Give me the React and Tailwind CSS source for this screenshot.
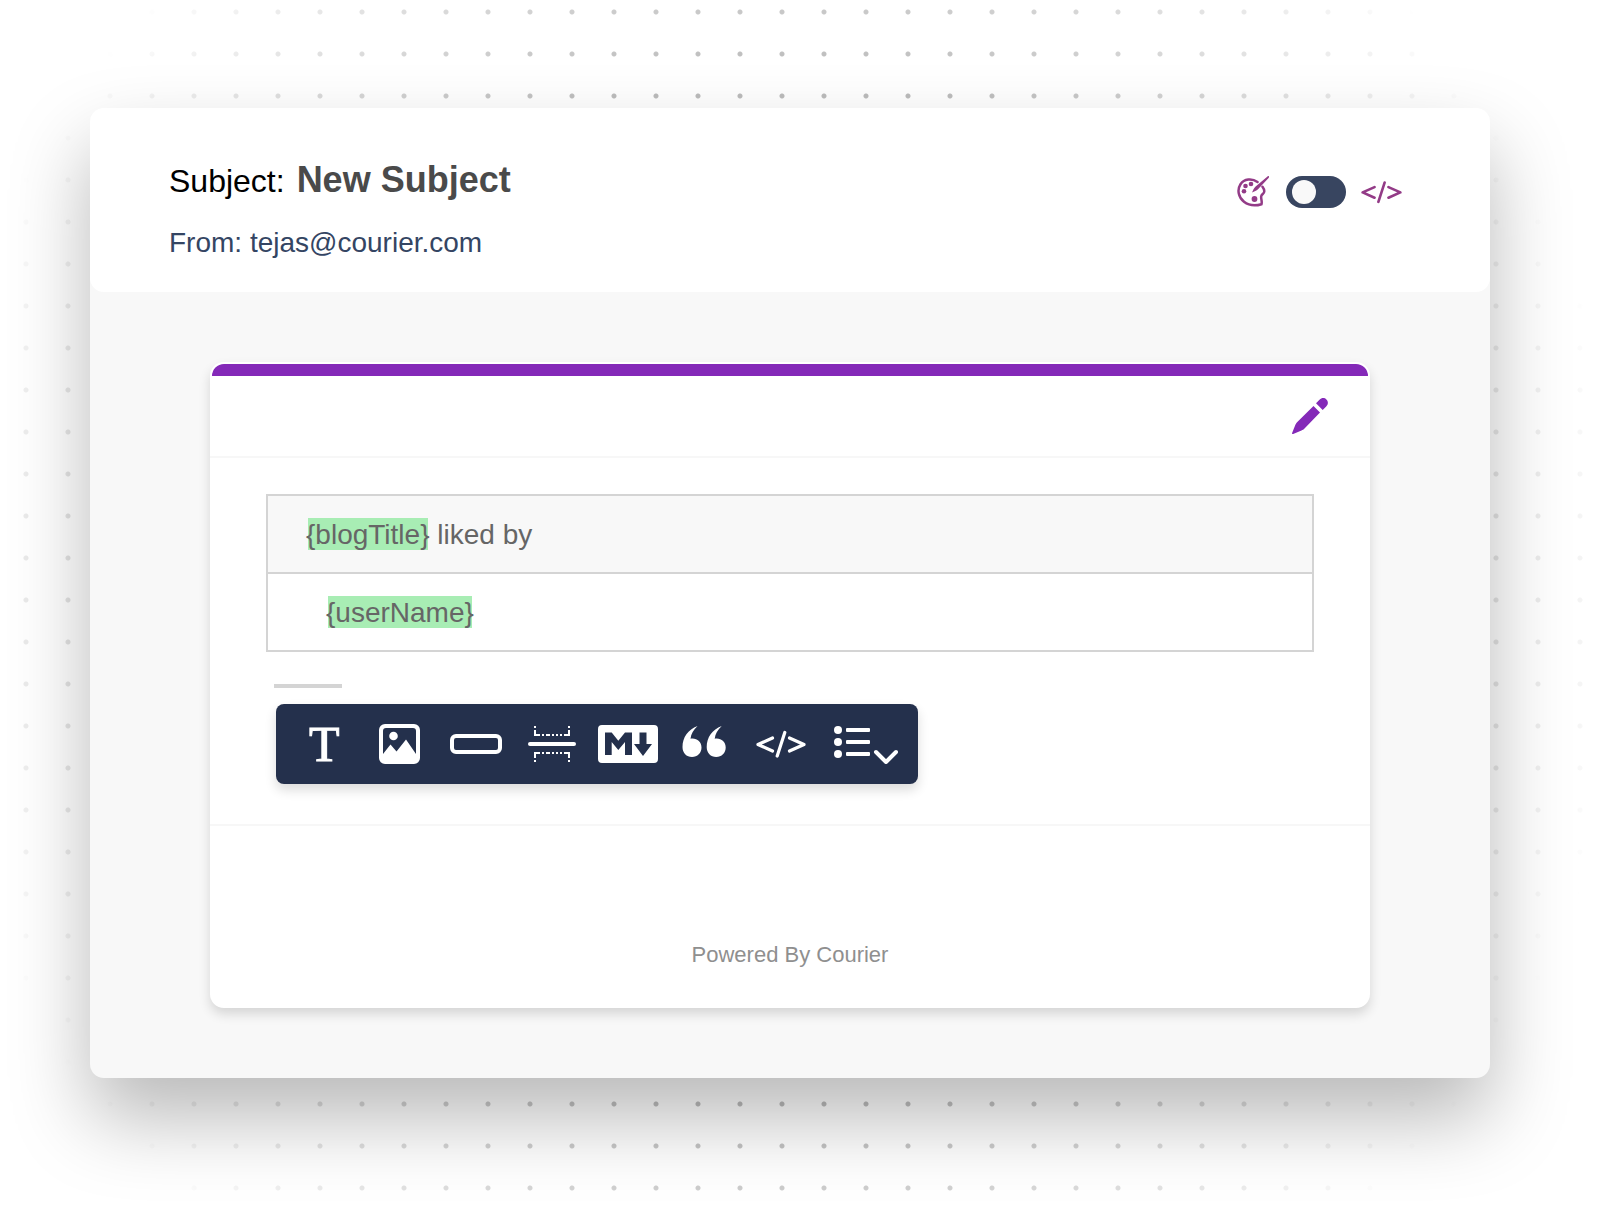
const HIGHLIGHT =
  "bg-transparent bg-[linear-gradient(#a8edb4,#a8edb4)] bg-[length:calc(100%_-_4px)_100%] bg-center bg-no-repeat pt-px text-inherit";

function CodeIcon({ className }) {
  return (
    <svg viewBox="0 0 50 28" className={className} fill="none" stroke="currentColor" strokeWidth="3.2" strokeLinecap="round" strokeLinejoin="round" aria-hidden="true">
      <path d="M16.500 8 2 14.500l14.500 6.500M33.500 8 48 14.500 33.500 21M28.800 2.500 21.200 26" />
    </svg>
  );
}

function PaletteIcon() {
  return (
    <svg viewBox="0 0 32 32" className="mr-0.5 h-8 w-8" aria-hidden="true">
      <path
        d="M20.500 6C15 2 7 2.800 3.500 8.200-.2 14 1.500 21.500 7 25.800c4.600 3.500 11.500 4.200 17.500 2.400.9-3-.9-5.400-.2-8.200.6-2 3-2.400 3-4.800 0-1.800-.8-3.200-1.800-4.500"
        fill="none"
        stroke="currentColor"
        strokeWidth="2.500"
        strokeLinecap="round"
      />
      <circle cx="14" cy="8" r="2.300" fill="currentColor" />
      <circle cx="8.500" cy="10" r="2.300" fill="currentColor" />
      <circle cx="7" cy="15.200" r="2.300" fill="currentColor" />
      <circle cx="17.500" cy="23" r="2.900" fill="currentColor" />
      <path d="M31.800.200c.5.500.3 1.200-.2 1.700L21 13.200c-1.500 1.500-3.600 2-6 3.200 1.200-2.600 2-4.500 3.600-6L30.500.500c.5-.4 1-.6 1.300-.3Z" fill="currentColor" />
    </svg>
  );
}

function PencilIcon() {
  return (
    <svg viewBox="0 0 36 36" className="size-9" fill="currentColor" aria-hidden="true">
      <path d="M21.500 8 28 14.500 12.500 30.500c-1 1-1.800 1.500-3 2L1.200 36c-.9.300-1.400-.3-1.100-1.100L3.300 27c.5-1.200 1-2 2-3Z" />
      <path d="m24 5.300 3.500-3.600c2.200-2.200 5-2.200 6.900-.2 2 2 2 4.800-.2 7L30.700 12Z" />
    </svg>
  );
}

function ImageIcon() {
  return (
    <svg viewBox="0 0 41 40" className="h-10 w-[41px]" aria-hidden="true">
      <path
        fill="currentColor"
        fillRule="evenodd"
        d="M6 0h29a6 6 0 0 1 6 6v28a6 6 0 0 1-6 6H6a6 6 0 0 1-6-6V6a6 6 0 0 1 6-6ZM7 4a3 3 0 0 0-3 3v23l7.500-9.500 6 7L27 15.500 37 30V7a3 3 0 0 0-3-3Z"
      />
      <circle cx="14.500" cy="12" r="4.300" fill="currentColor" />
    </svg>
  );
}

function ButtonIcon() {
  return (
    <svg viewBox="0 0 52 20" className="h-5 w-[52px]" aria-hidden="true">
      <rect x="2" y="2" width="48" height="16" rx="4" fill="none" stroke="currentColor" strokeWidth="4" />
    </svg>
  );
}

function DividerIcon() {
  return (
    <svg viewBox="0 0 48 36" className="h-9 w-12" fill="currentColor" aria-hidden="true">
      <rect x="0" y="16" width="48" height="4" rx="2" />
      <g fill="none" stroke="currentColor" strokeWidth="2">
        <path d="M7 0v2M41 0v2M7 4v5h5M41 4v5h-5M7 36v-2M41 36v-2M7 32v-5h5M41 32v-5h-5" />
        <path d="M14 9h2M18 9h4M24 9h2M28 9h2M32 9h2M14 27h2M18 27h4M24 27h2M28 27h2M32 27h2" />
      </g>
    </svg>
  );
}

function MarkdownIcon() {
  return (
    <svg viewBox="0 -1 60 40" className="h-10 w-[60px]" fill="currentColor" aria-hidden="true">
      <path
        fillRule="evenodd"
        d="M4 0h52a4 4 0 0 1 4 4v30a4 4 0 0 1-4 4H4a4 4 0 0 1-4-4V4a4 4 0 0 1 4-4ZM7 7.500V30h6.700V17l6.600 8 6.700-8v13h7V7.500h-7l-6.700 8.200-6.600-8.200ZM41.500 7.500v11.500H36L45 31l9-12h-5.500V7.500Z"
      />
    </svg>
  );
}

function QuoteIcon() {
  return (
    <svg viewBox="0 0 44 31" className="mb-1.5 h-[31px] w-11" fill="currentColor" aria-hidden="true">
      <path d="M15.500 0C6 3.500.500 11.500.500 21c0 6 4 10 9.500 10 5.400 0 9.500-4 9.500-9.500 0-5.300-4-9-9-9-.7 0-1.400 0-2 .2C9 8 11.500 4 15.500 0Z" />
      <path d="M39.700 0c-9.500 3.500-15 11.500-15 21 0 6 4 10 9.500 10 5.400 0 9.500-4 9.500-9.500 0-5.300-4-9-9-9-.7 0-1.400 0-2 .2C33.200 8 35.700 4 39.700 0Z" />
    </svg>
  );
}

function ListIcon() {
  return (
    <svg viewBox="0 -1 64 40" className="h-10 w-16" fill="currentColor" aria-hidden="true">
      <circle cx="4" cy="5" r="4" />
      <circle cx="4" cy="17" r="4" />
      <circle cx="4" cy="29" r="4" />
      <rect x="12" y="3" width="24" height="4" rx="1" />
      <rect x="12" y="15" width="24" height="4" rx="1" />
      <rect x="12" y="27" width="24" height="4" rx="1" />
      <path d="m42 27 10 10 10-10" fill="none" stroke="currentColor" strokeWidth="4" strokeLinecap="round" strokeLinejoin="round" />
    </svg>
  );
}

function Tool({ label, className, children }) {
  return (
    <button type="button" aria-label={label} className={`flex h-10 items-center ${className}`}>
      {children}
    </button>
  );
}

export default function App() {
  return (
    <main className="relative isolate min-h-screen overflow-hidden bg-white pt-[108px] pr-32 pb-[148px] pl-[90px] font-['Liberation_Sans',Arial,sans-serif]">
      <div className="absolute inset-0 -z-10 bg-[radial-gradient(circle,#bcbcbc_1px,#bcbcbc_2px,#bcbcbc00_3px)] bg-[size:42px_42px] bg-[position:5px_33px] [mask-image:radial-gradient(circle_860px_at_48%_48%,black_60%,transparent)]" />
      <div className="rounded-[14px] bg-[#f8f8f8] pb-[70px] shadow-[0_40px_80px_rgba(0,0,0,0.28)]">
        <header className="flex items-start justify-between rounded-[14px] bg-white pt-12 pr-20 pb-[29px] pl-[79px]">
          <div>
            <h1 className="flex items-baseline gap-3 leading-12">
              <span className="text-[32px] text-black">Subject:</span>
              <span className="text-[36px] font-bold text-[#4a4a4a]">New Subject</span>
            </h1>
            <p className="mt-[18px] text-[28px] leading-10 text-[#344563]">From: tejas@courier.com</p>
          </div>
          <div className="mt-5 mr-2 flex items-center gap-[15px] text-[#933b87]">
            <PaletteIcon />
            <input
              type="checkbox"
              role="switch"
              aria-label="Code view"
              className="h-8 w-[60px] appearance-none rounded-full bg-[#384560] p-1 pl-1.5 before:block before:size-6 before:rounded-full before:bg-[#f9f9f9] checked:before:ml-6"
            />
            <CodeIcon className="h-6 w-[41px]" />
          </div>
        </header>

        <section className="mx-[120px] mt-[70px] overflow-hidden rounded-[14px] bg-white shadow-[0_6px_12px_rgba(0,0,0,0.14)]">
          <div className="px-0.5 pt-0.5">
            <div className="h-3 rounded-t-[14px] bg-[#8429b8]" />
          </div>
          <div className="flex h-[82px] items-center justify-end border-b-2 border-[#f7f7f7] pr-[42px]">
            <button type="button" aria-label="Edit header" className="text-[#8429b8]">
              <PencilIcon />
            </button>
          </div>

          <div className="border-b-2 border-[#f7f7f7] px-14 pt-9 pb-10">
            <div className="border-2 border-[#d4d4d4] text-[28px] leading-8 text-[#666666]">
              <p className="border-b-2 border-[#d4d4d4] bg-[#f8f8f8] px-[38px] pt-[23px] pb-[21px]">
                <mark className={HIGHLIGHT}>{"{blogTitle}"}</mark> liked by
              </p>
              <p className="px-[58px] pt-[23px] pb-[21px]">
                <mark className={HIGHLIGHT}>{"{userName}"}</mark>
              </p>
            </div>
            <div className="mt-8 ml-2 h-1 w-[68px] bg-[#d4d4d4]" />
            <div role="toolbar" aria-label="Insert block" className="mt-4 ml-2.5 flex h-20 w-fit items-center rounded-lg bg-[#24304c] pr-5 pl-[33px] text-white shadow-[0_6px_12px_rgba(0,0,0,0.14)]">
              <Tool label="Text" className="w-[70px] font-['Liberation_Serif',serif] text-[50px] leading-10 [-webkit-text-stroke:1px_white]">T</Tool>
              <Tool label="Image" className="w-[71px]"><ImageIcon /></Tool>
              <Tool label="Button" className="w-[78px]"><ButtonIcon /></Tool>
              <Tool label="Divider" className="w-[70px]"><DividerIcon /></Tool>
              <Tool label="Markdown" className="w-[84px]"><MarkdownIcon /></Tool>
              <Tool label="Quote" className="w-[74px]"><QuoteIcon /></Tool>
              <Tool label="Code" className="w-[78px]"><CodeIcon className="h-7 w-[50px]" /></Tool>
              <Tool label="List" className="w-16"><ListIcon /></Tool>
            </div>
          </div>

          <footer className="pt-[115px] pb-[39px] text-center text-[22px] leading-7 text-[#8f8f8f]">Powered By Courier</footer>
        </section>
      </div>
    </main>
  );
}
